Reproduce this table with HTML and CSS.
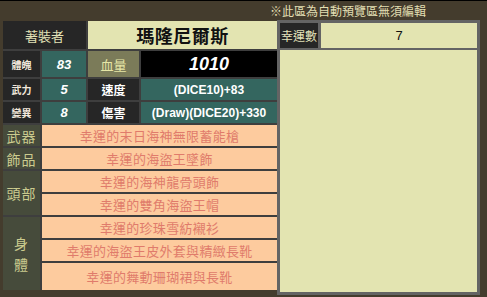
FILE: index.html
```html
<!DOCTYPE html>
<html lang="zh-Hant">
<head>
<meta charset="utf-8">
<link rel="stylesheet" href="styles.css">
</head>
<body>
<div class="notice">※此區為自動預覽區無須編輯</div>
<div class="main">
  <div class="sheet">
    <div class="cell dark wearer">著裝者</div>
    <div class="cell name">瑪隆尼爾斯</div>

    <div class="cell dark stat">體魄</div>
    <div class="cell teal num">83</div>
    <div class="cell olive">血量</div>
    <div class="cell black hp">1010</div>

    <div class="cell dark stat">武力</div>
    <div class="cell teal num">5</div>
    <div class="cell dark key">速度</div>
    <div class="cell teal formula">(DICE10)+83</div>

    <div class="cell dark stat">變異</div>
    <div class="cell teal num">8</div>
    <div class="cell dark key">傷害</div>
    <div class="cell teal formula">(Draw)(DICE20)+330</div>

    <div class="cell slot">武器</div>
    <div class="cell item">幸運的末日海神無限蓄能槍</div>

    <div class="cell slot">飾品</div>
    <div class="cell item">幸運的海盜王墜飾</div>

    <div class="cell slot span2">頭部</div>
    <div class="cell item">幸運的海神龍骨頭飾</div>
    <div class="cell item">幸運的雙角海盜王帽</div>

    <div class="cell slot span3"><span class="vertical">身<br>體</span></div>
    <div class="cell item">幸運的珍珠雪紡襯衫</div>
    <div class="cell item">幸運的海盜王皮外套與精緻長靴</div>
    <div class="cell item">幸運的舞動珊瑚裙與長靴</div>
  </div>

  <div class="panel">
    <div class="cell dark luck-label">幸運數</div>
    <div class="cell luck-value">7</div>
    <div class="preview"></div>
  </div>
</div>
</body>
</html>
```
FILE: styles.css
```css
html, body {
  margin: 0;
  padding: 0;
}

body {
  width: 487px;
  height: 297px;
  background: #443c2d;
  border-top: 1px solid #000;
  box-sizing: border-box;
  overflow: hidden;
  font-family: "Noto Sans CJK TC", "Liberation Sans", sans-serif;
}

.notice {
  height: 19px;
  line-height: 19px;
  padding-left: 270px;
  font-size: 12px;
  color: #e2dfb3;
  white-space: nowrap;
}

.main {
  display: flex;
  align-items: flex-start;
}

/* left character sheet */
.sheet {
  margin-left: 3px;
  margin-top: 1px;
  width: 274px;
  display: grid;
  grid-template-columns: 37px 44px 51px 1fr;
  grid-template-rows: 28px 26px 21px 21px 21px 21px 21px 21px 21px 21px 27px;
  gap: 2px;
  background: #3e3e3e;
}

.cell {
  display: flex;
  align-items: center;
  justify-content: center;
  white-space: nowrap;
  overflow: hidden;
}

.dark { background: #262626; }
.teal { background: #34665f; }
.olive { background: #7b7b59; color: #e6e6a6; font-size: 13px; }
.black { background: #000; }

.wearer {
  grid-column: 1 / 3;
  color: #e2e2b6;
  font-size: 13px;
}

.name {
  grid-column: 3 / 5;
  background: #e3e4b1;
  color: #111;
  font-size: 18px;
  font-weight: 700;
  letter-spacing: 0.5px;
}

.stat {
  color: #f2e8dc;
  font-size: 10px;
  font-weight: 700;
}

.num {
  color: #fff;
  font-family: "Liberation Sans", sans-serif;
  font-weight: 700;
  font-style: italic;
  font-size: 13px;
}

.hp {
  color: #fff;
  font-family: "Liberation Sans", sans-serif;
  font-weight: 700;
  font-style: italic;
  font-size: 18px;
}

.key {
  color: #fff;
  font-size: 12px;
  font-weight: 700;
}

.formula {
  color: #fff;
  font-family: "Liberation Sans", sans-serif;
  font-weight: 700;
  font-size: 12px;
}

.slot {
  background: #464b3b;
  color: #cbcb8f;
  font-size: 14px;
  letter-spacing: 1px;
}

.span2 { grid-row: span 2; }
.span3 { grid-row: span 3; }

.vertical {
  display: block;
  line-height: 21px;
  text-align: center;
}

.item {
  grid-column: 2 / 5;
  background: #fdcb9e;
  color: #e07b6b;
  font-size: 13px;
  letter-spacing: 0.3px;
}

/* right preview panel */
.panel {
  width: 203px;
  height: 275px;
  box-sizing: border-box;
  padding: 3px;
  background: #646464;
  display: grid;
  grid-template-columns: 38px 1fr;
  grid-template-rows: 25px 1fr;
  column-gap: 3px;
  row-gap: 2px;
}

.luck-label {
  color: #e3e3bb;
  font-size: 12px;
}

.luck-value {
  background: #e3e4b1;
  color: #111;
  font-family: "Liberation Sans", sans-serif;
  font-size: 13px;
}

.preview {
  grid-column: 1 / 3;
  background: #e3e4b1;
}
```
